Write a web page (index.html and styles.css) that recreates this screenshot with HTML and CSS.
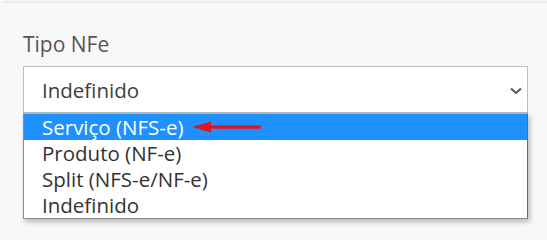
FILE: index.html
```html
<!DOCTYPE html>
<html lang="pt">
<head>
<meta charset="utf-8">
<title>Tipo NFe</title>
<link rel="stylesheet" href="styles.css">
</head>
<body>
<div class="card-edge"></div>
<div class="field">
  <div class="label">Tipo NFe</div>
  <div class="select">
    <span class="value">Indefinido</span>
    <svg class="chevron" width="12" height="8" viewBox="0 0 12 8"><path d="M1 1.5 L6 6 L11 1.5" fill="none" stroke="#555" stroke-width="2"/></svg>
  </div>
  <div class="options-list">
    <div class="option selected">Serviço (NFS-e)</div>
    <div class="option">Produto (NF-e)</div>
    <div class="option">Split (NFS-e/NF-e)</div>
    <div class="option">Indefinido</div>
  </div>
  <svg class="red-arrow" width="72" height="14" viewBox="0 0 72 14"><path d="M1 7 L20 1.5 L20 5.3 L70 5.3 L70 8.7 L20 8.7 L20 12.5 Z" fill="#e3141c"/></svg>
</div>
</body>
</html>
```

FILE: styles.css
```css
html, body {
  margin: 0;
  padding: 0;
  background: #f8f8f8;
  font-family: "Open Sans", "Noto Sans", sans-serif;
}

.card-edge {
  height: 2px;
  margin: 1px 0 0 4px;
  background: #ececec;
}

.field {
  position: relative;
  padding: 27px 19px 0 23px;
  height: 234px;
  box-sizing: border-box;
}

.label {
  font-size: 21px;
  line-height: 28px;
  color: #555;
}

.select {
  margin-top: 8px;
  height: 45px;
  border: 1px solid #babfc4;
  background: #fff;
  display: flex;
  align-items: center;
  justify-content: space-between;
  padding: 0 5px 0 18px;
}

.value {
  font-size: 20.5px;
  line-height: 26px;
  color: #3e3e3e;
}

.chevron {
  display: block;
  margin-top: 2px;
}

.options-list {
  position: absolute;
  z-index: 10;
  left: 23px;
  top: 110px;
  width: 503px;
  background: #fff;
  border: 1px solid #8a8a8a;
  border-top-color: #b5b5b5;
  border-right-color: #6c6c6c;
  box-shadow: 2px 3px 5px rgba(0, 0, 0, 0.25);
}

.option {
  height: 26px;
  line-height: 26px;
  padding-left: 18px;
  font-size: 20.5px;
  color: #333;
}

.option.selected {
  background: #1e90ff;
  color: #fff;
}

.red-arrow {
  position: absolute;
  z-index: 11;
  left: 191px;
  top: 117px;
}
```
